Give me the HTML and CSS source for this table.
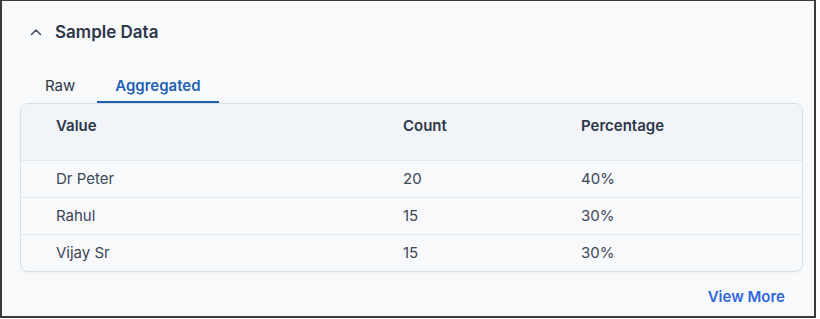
FILE: index.html
```html
<!DOCTYPE html>
<html>
<head>
<meta charset="utf-8">
<link rel="stylesheet" href="styles.css">
</head>
<body>
<div class="frame">
  <div class="section-head">
    <svg class="chev" width="12" height="8" viewBox="0 0 12 8"><path d="M1.5 6.5 L6 2 L10.5 6.5" fill="none" stroke="#4a5568" stroke-width="1.6" stroke-linecap="round" stroke-linejoin="round"/></svg>
    <span class="title">Sample Data</span>
  </div>
  <div class="tabs">
    <div class="tab">Raw</div>
    <div class="tab active">Aggregated</div>
  </div>
  <div class="table-wrap">
    <table class="tbl">
      <thead>
        <tr><th>Value</th><th>Count</th><th>Percentage</th></tr>
      </thead>
      <tbody>
        <tr><td>Dr Peter</td><td>20</td><td>40%</td></tr>
        <tr><td>Rahul</td><td>15</td><td>30%</td></tr>
        <tr><td>Vijay Sr</td><td>15</td><td>30%</td></tr>
      </tbody>
    </table>
  </div>
  <div class="footer">
    <a class="more">View More</a>
  </div>
</div>
</body>
</html>
```
FILE: styles.css
```css
html, body {
  margin: 0;
  padding: 0;
  background: #ffffff;
}
body {
  font-family: Inter, "Noto Sans", sans-serif;
  color: #2d3748;
}
.frame {
  width: 812px;
  height: 315px;
  border: 2px solid #3a3a3a;
  border-top-width: 1px;
  background: #f8f9fb;
  display: flex;
  flex-direction: column;
}
.section-head {
  display: flex;
  align-items: center;
  height: 30px;
  margin-top: 16px;
  padding-left: 28px;
}
.chev {
  margin-right: 13px;
}
.title {
  font-size: 17px;
  font-weight: 600;
  color: #2d3748;
}
.tabs {
  display: flex;
  gap: 4px;
  margin-top: 25px;
  padding-left: 25px;
  height: 31px;
}
.tab {
  font-size: 15px;
  color: #2d3748;
  padding: 4px 18px 0;
  line-height: 20px;
  box-sizing: border-box;
  height: 31px;
}
.tab.active {
  color: #1f5fb3;
  font-weight: 600;
  border-bottom: 2px solid #1f5fb3;
}
.table-wrap {
  margin: 0 11px 0 18px;
  border: 1px solid #d8dee7;
  border-radius: 8px;
  overflow: hidden;
  background: #f8f9fb;
  box-shadow: 0 1px 2px rgba(0,0,0,0.04);
}
.tbl {
  width: 100%;
  border-collapse: collapse;
  font-size: 15px;
}
.tbl th {
  background: #f1f4f9;
  text-align: left;
  font-weight: 600;
  color: #2d3748;
  height: 56px;
  vertical-align: top;
  padding: 12px 0 0 0;
  box-sizing: border-box;
  border-bottom: 1px solid #e2e8f0;
}
.tbl td {
  height: 36px;
  padding: 0;
  color: #3d4757;
  border-bottom: 1px solid #e2e8f0;
}
.tbl tr:last-child td {
  border-bottom: none;
}
.tbl th:nth-child(1), .tbl td:nth-child(1) { padding-left: 35px; width: 347px; }
.tbl th:nth-child(2), .tbl td:nth-child(2) { width: 178px; }
.footer {
  display: flex;
  justify-content: flex-end;
  padding-right: 29px;
  margin-top: 15px;
}
.more {
  font-size: 15px;
  font-weight: 600;
  color: #2f66e0;
}
```
